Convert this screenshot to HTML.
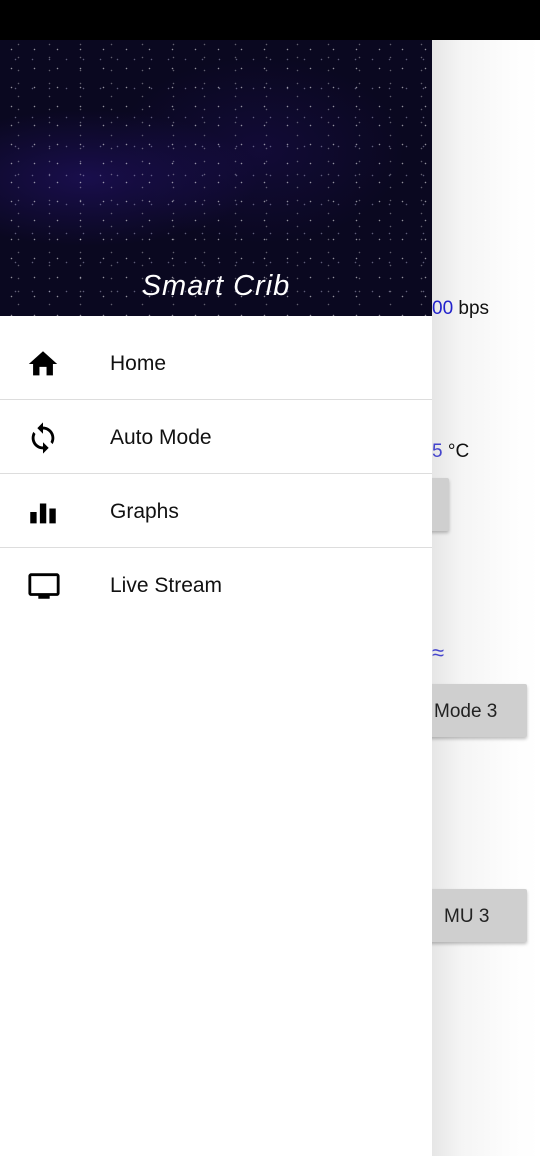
<!DOCTYPE html>
<html><head><style>
body{margin:0;width:540px;height:1156px;position:relative;overflow:hidden;background:#fff;font-family:"Liberation Sans",sans-serif;}
.status{position:absolute;left:0;top:0;width:540px;height:40px;background:#000;}
.bg{position:absolute;left:432px;top:40px;width:108px;height:1116px;background:linear-gradient(90deg,#e6e6e6 0,#f5f5f5 30px,#fdfdfd 80px,#fff 100%);}
.t{position:absolute;font-size:19px;color:#111;}
.btn{position:absolute;background:#cfcfcf;box-shadow:0 2px 3px rgba(0,0,0,.25);border-radius:2px;font-size:19px;color:#222;}
.drawer{position:absolute;left:0;top:40px;width:432px;height:1116px;background:#fff;}
.hdr{position:absolute;left:0;top:0;width:432px;height:276px;background:
radial-gradient(circle,rgba(255,255,255,.55) 0.5px,transparent 1px) 0 0/23px 19px,
radial-gradient(circle,rgba(220,220,255,.4) 0.5px,transparent 1px) 7px 5px/17px 29px,
radial-gradient(circle,rgba(255,255,255,.35) 0.5px,transparent 1px) 3px 11px/31px 13px,
radial-gradient(ellipse at 20% 50%,rgba(40,20,120,.5),transparent 35%),
radial-gradient(ellipse at 60% 40%,rgba(30,15,90,.4),transparent 40%),
#0a0820;}
.title{position:absolute;left:0;width:432px;top:230px;text-align:center;color:#fff;font-size:29px;font-style:italic;font-family:"Liberation Sans",sans-serif;font-weight:300;letter-spacing:1px;}
.item{position:absolute;left:0;width:432px;height:73px;border-bottom:1px solid #ddd;}
.item span{position:absolute;left:110px;top:26px;font-size:21px;color:#111;}
.item svg{position:absolute;left:26px;top:21px;}
</style></head><body>
<div class="status"></div>
<div class="bg"></div>
<div class="t" style="left:432px;top:298px"><span style="color:#2222cc">00</span> bps</div>
<div class="t" style="left:432px;top:441px"><span style="color:#4444cc">5</span> °C</div>
<div class="btn" style="left:420px;top:478px;width:29px;height:53px"></div>
<div class="t" style="left:432px;top:640px;color:#4444cc;font-size:22px">≈</div>
<div class="btn" style="left:420px;top:684px;width:107px;height:53px"><span style="position:absolute;left:14px;top:17px">Mode 3</span></div>
<div class="btn" style="left:420px;top:889px;width:107px;height:53px"><span style="position:absolute;left:24px;top:17px">MU 3</span></div>
<div class="drawer">
<div class="hdr"><div class="title">Smart Crib</div></div>
<div class="item" style="top:286px"><svg width="34" height="34" viewBox="0 0 24 24"><path d="M9.5 20v-6h5v6h4.5v-8h3L12 3 2 12h3v8z"/></svg><span>Home</span></div>
<div class="item" style="top:360px"><svg width="34" height="34" viewBox="0 0 24 24"><path d="M12 4V1L8 5l4 4V6c3.3 0 6 2.7 6 6 0 1-.3 2-.7 2.8l1.5 1.5C19.5 15 20 13.6 20 12c0-4.4-3.6-8-8-8zm0 14c-3.3 0-6-2.7-6-6 0-1 .3-2 .7-2.8L5.2 7.7C4.5 9 4 10.4 4 12c0 4.4 3.6 8 8 8v3l4-4-4-4v3z"/></svg><span>Auto Mode</span></div>
<div class="item" style="top:434px"><svg width="34" height="34" viewBox="0 0 24 24"><path d="M3 12h4.5v8H3zM9.8 6h4.5v14H9.8zM16.5 9.5H21V20h-4.5z"/></svg><span>Graphs</span></div>
<div class="item" style="top:508px;border:none"><svg width="36" height="34" viewBox="0 0 24 24"><path d="M21 3H3c-1.1 0-2 .9-2 2v12c0 1.1.9 2 2 2h5v2h8v-2h5c1.1 0 2-.9 2-2V5c0-1.1-.9-2-2-2zm0 14H3V5h18v12z"/></svg><span>Live Stream</span></div>
</div>
</body></html>
